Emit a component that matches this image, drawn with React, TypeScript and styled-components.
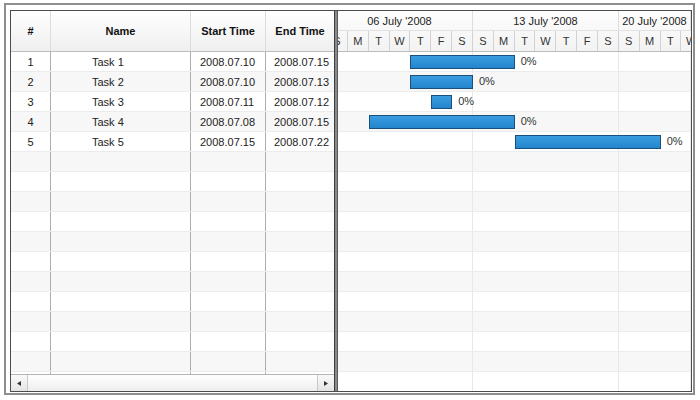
import React from "react";
import styled, { createGlobalStyle } from "styled-components";

const GlobalStyle = createGlobalStyle`
  * { box-sizing: border-box; }
  body {
    margin: 0;
    background: #ffffff;
    font-family: "Liberation Sans", Arial, sans-serif;
    font-size: 11px;
    color: #222;
  }
`;

const DAY = 146 / 7;
const OFFSET = 11;

const Frame = styled.div`
  margin: 3px 0 0 4px;
  width: 691px;
  height: 392px;
  border: 2px solid #8e8e8e;
  padding: 5px 1px 1px 4px;
  background: #fff;
`;

const Chart = styled.div`
  width: 682px;
  height: 382px;
  border: 1px solid #4c4c4c;
  display: flex;
  overflow: hidden;
`;

const GridPanel = styled.div`
  width: 323px;
  display: flex;
  flex-direction: column;
`;

const GridHeader = styled.div`
  height: 41px;
  display: flex;
  border-bottom: 1px solid #bcbcbc;
  background: linear-gradient(#ffffff, #efefef);
`;

const HeadCell = styled.div<{ $w: number; $last?: boolean }>`
  width: ${(p) => p.$w}px;
  flex-shrink: 0;
  display: flex;
  align-items: center;
  justify-content: center;
  font-weight: bold;
  color: #111;
  border-right: ${(p) => (p.$last ? "none" : "1px solid #dcdcdc")};
`;

const GridBody = styled.div`
  flex: 1;
  overflow: hidden;
`;

const Row = styled.div`
  height: 20px;
  display: flex;
  border-bottom: 1px solid #ececec;
  &:nth-child(even) {
    background: #f7f7f7;
  }
`;

const Cell = styled.div<{ $w: number; $align: "center" | "left"; $pad?: number; $last?: boolean }>`
  width: ${(p) => p.$w}px;
  flex-shrink: 0;
  display: flex;
  align-items: center;
  justify-content: ${(p) => (p.$align === "center" ? "center" : "flex-start")};
  padding-left: ${(p) => p.$pad ?? 0}px;
  white-space: nowrap;
  color: #222;
  border-right: ${(p) => (p.$last ? "none" : "1px solid #adadad")};
`;

const ScrollBar = styled.div`
  height: 17px;
  display: flex;
  border-top: 1px solid #b4b4b4;
  background: linear-gradient(#fdfdfd, #ececec);
`;

const ScrollButton = styled.div`
  width: 17px;
  display: flex;
  align-items: center;
  justify-content: center;
  background: linear-gradient(#fafafa, #e4e4e4);
  border-right: 1px solid #c8c8c8;
  &:last-child {
    border-right: none;
    border-left: 1px solid #c8c8c8;
  }
`;

const ScrollTrack = styled.div`
  flex: 1;
  background: linear-gradient(#ffffff, #eeeeee);
`;

const Splitter = styled.div`
  width: 4px;
  flex-shrink: 0;
  background: #8a8a8a;
  border-left: 1px solid #3e3e3e;
  border-right: 1px solid #5a5a5a;
`;

const GanttPanel = styled.div`
  width: 353px;
  display: flex;
  flex-direction: column;
  overflow: hidden;
`;

const GanttHeader = styled.div`
  height: 41px;
  border-bottom: 1px solid #bcbcbc;
  background: linear-gradient(#fdfdfd, #f3f3f3);
  overflow: hidden;
`;

const Track = styled.div`
  margin-left: -${OFFSET}px;
  display: flex;
  height: 100%;
`;

const WeekRow = styled.div`
  height: 20px;
  border-bottom: 1px solid #e2e2e2;
`;

const WeekCell = styled.div<{ $grow?: boolean }>`
  width: ${(p) => (p.$grow ? "auto" : `${DAY * 7}px`)};
  flex: ${(p) => (p.$grow ? "1 0 0" : "0 0 auto")};
  display: flex;
  align-items: center;
  justify-content: center;
  white-space: nowrap;
  overflow: hidden;
  color: #222;
  border-right: 1px solid #dedede;
`;

const DayRow = styled.div`
  height: 20px;
`;

const DayCell = styled.div`
  width: ${DAY}px;
  flex-shrink: 0;
  display: flex;
  align-items: center;
  justify-content: center;
  color: #333;
  border-right: 1px solid #d2d2d2;
`;

const GanttBody = styled.div`
  flex: 1;
  overflow: hidden;
`;

const GanttRow = styled.div`
  position: relative;
  height: 20px;
  border-bottom: 1px solid #ececec;
  &:nth-child(even) {
    background: #f7f7f7;
  }
`;

const LineCell = styled.div<{ $grow?: boolean }>`
  width: ${(p) => (p.$grow ? "auto" : `${DAY * 7}px`)};
  flex: ${(p) => (p.$grow ? "1 0 0" : "0 0 auto")};
  border-right: 1px solid #e8e8e8;
`;

const Bar = styled.div`
  position: absolute;
  top: 3px;
  height: 14px;
  background: linear-gradient(#3a9ce0, #2385cc);
  border: 1px solid #1b4f7c;
`;

const Percent = styled.span`
  position: absolute;
  top: 0;
  height: 19px;
  line-height: 19px;
  color: #333;
`;

const ArrowIcon = ({ dir }: { dir: "left" | "right" }) => (
  <svg width="4" height="5" viewBox="0 0 4 5">
    {dir === "left" ? (
      <polygon points="4,0 4,5 0,2.5" fill="#333" />
    ) : (
      <polygon points="0,0 0,5 4,2.5" fill="#333" />
    )}
  </svg>
);

interface Task {
  id: number;
  name: string;
  start: string;
  end: string;
}

const tasks: Task[] = [
  { id: 1, name: "Task 1", start: "2008.07.10", end: "2008.07.15" },
  { id: 2, name: "Task 2", start: "2008.07.10", end: "2008.07.13" },
  { id: 3, name: "Task 3", start: "2008.07.11", end: "2008.07.12" },
  { id: 4, name: "Task 4", start: "2008.07.08", end: "2008.07.15" },
  { id: 5, name: "Task 5", start: "2008.07.15", end: "2008.07.22" },
];

const days = ["S", "M", "T", "W", "T", "F", "S", "S", "M", "T", "W", "T", "F", "S", "S", "M", "T", "W"];
const weeks = ["06 July '2008", "13 July '2008", "20 July '2008"];

const cols = [40, 140, 75, 68];
const ROWS = 17;

// days counted from Sunday 06 July 2008
const dayIndex = (d: string) => parseInt(d.slice(8), 10) - 6;

const App: React.FC = () => {
  const empty = Array.from({ length: ROWS - tasks.length });
  return (
    <>
      <GlobalStyle />
      <Frame>
        <Chart>
          <GridPanel>
            <GridHeader>
              <HeadCell $w={cols[0]}>#</HeadCell>
              <HeadCell $w={cols[1]}>Name</HeadCell>
              <HeadCell $w={cols[2]}>Start Time</HeadCell>
              <HeadCell $w={cols[3]} $last>
                End Time
              </HeadCell>
            </GridHeader>
            <GridBody>
              {tasks.map((t) => (
                <Row key={t.id}>
                  <Cell $w={cols[0]} $align="center">{t.id}</Cell>
                  <Cell $w={cols[1]} $align="left" $pad={41}>{t.name}</Cell>
                  <Cell $w={cols[2]} $align="left" $pad={9}>{t.start}</Cell>
                  <Cell $w={cols[3]} $align="left" $pad={8} $last>{t.end}</Cell>
                </Row>
              ))}
              {empty.map((_, i) => (
                <Row key={`e${i}`}>
                  <Cell $w={cols[0]} $align="center" />
                  <Cell $w={cols[1]} $align="left" />
                  <Cell $w={cols[2]} $align="left" />
                  <Cell $w={cols[3]} $align="left" $last />
                </Row>
              ))}
            </GridBody>
            <ScrollBar>
              <ScrollButton>
                <ArrowIcon dir="left" />
              </ScrollButton>
              <ScrollTrack />
              <ScrollButton>
                <ArrowIcon dir="right" />
              </ScrollButton>
            </ScrollBar>
          </GridPanel>
          <Splitter />
          <GanttPanel>
            <GanttHeader>
              <WeekRow>
                <Track>
                  {weeks.map((w, i) => (
                    <WeekCell key={w} $grow={i === weeks.length - 1}>
                      {w}
                    </WeekCell>
                  ))}
                </Track>
              </WeekRow>
              <DayRow>
                <Track>
                  {days.map((d, i) => (
                    <DayCell key={i}>{d}</DayCell>
                  ))}
                </Track>
              </DayRow>
            </GanttHeader>
            <GanttBody>
              {Array.from({ length: ROWS + 1 }).map((_, i) => {
                const t = tasks[i];
                const left = t ? dayIndex(t.start) * DAY - OFFSET : 0;
                const width = t ? (dayIndex(t.end) - dayIndex(t.start)) * DAY : 0;
                return (
                  <GanttRow key={i}>
                    <Track>
                      <LineCell />
                      <LineCell />
                      <LineCell $grow />
                    </Track>
                    {t && (
                      <>
                        <Bar style={{ left, width }} />
                        <Percent style={{ left: left + width + 6 }}>0%</Percent>
                      </>
                    )}
                  </GanttRow>
                );
              })}
            </GanttBody>
          </GanttPanel>
        </Chart>
      </Frame>
    </>
  );
};

export default App;
